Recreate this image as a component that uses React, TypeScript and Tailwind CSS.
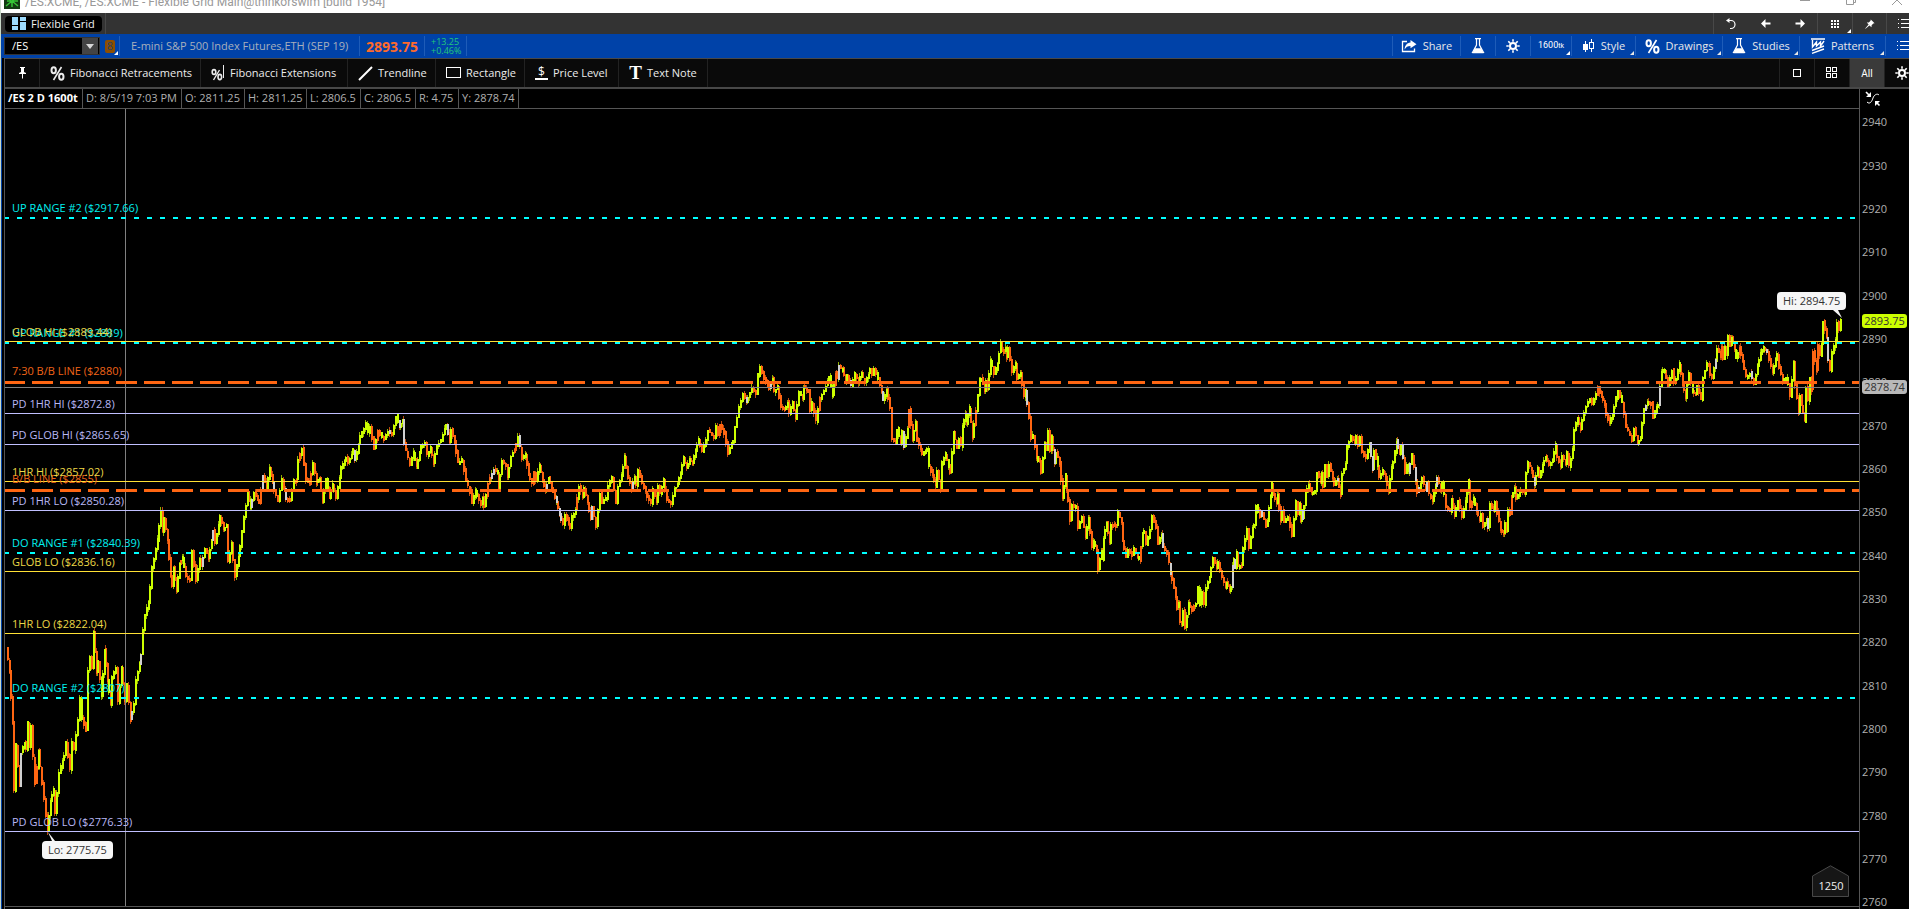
import React from "react";

/* ---------- price scale ---------- */

const VIEW = { x: 5, y: 109, w: 1854, h: 797 };
const PX_PER_POINT = 4.332;
const yOf = (price: number) => 341.5 + (2889.44 - price) * PX_PER_POINT;
const topPct = (y: number) => `${((y - VIEW.y) / VIEW.h) * 100}%`;
const leftPct = (x: number) => `${((x - VIEW.x) / VIEW.w) * 100}%`;

/* Swing points of the tick chart, x then y, in chart units. */
const SWINGS: number[] = [
  7, 648, 10, 672, 13, 723, 15, 790, 17, 745, 20, 787, 22, 753, 25, 742, 27, 750, 28, 722, 30, 748, 32, 727, 34, 757, 36, 783,
  39, 751, 43, 783, 45, 800, 48, 831, 51, 800, 54, 790, 56, 813, 60, 773, 65, 755, 67, 742, 71, 770, 73, 743, 75, 750, 79, 720,
  81, 698, 83, 718, 87, 730, 89, 670, 91, 657, 93, 668, 94, 632, 97, 672, 99, 661, 102, 696, 105, 650, 108, 680, 111, 704, 113, 678,
  117, 668, 119, 702, 122, 668, 126, 700, 128, 685, 131, 720, 135, 703, 137, 680, 142, 655, 144, 630, 146, 614, 149, 603, 151, 588,
  153, 567, 155, 558, 158, 540, 162, 512, 163, 531, 165, 519, 168, 540, 171, 577, 173, 586, 174, 567, 177, 591, 180, 564, 183, 557,
  187, 577, 191, 580, 193, 551, 197, 580, 200, 559, 202, 566, 206, 549, 209, 558, 214, 531, 216, 543, 221, 517, 224, 529, 227, 525,
  229, 561, 232, 544, 236, 576, 241, 547, 245, 517, 248, 493, 251, 508, 255, 492, 260, 503, 264, 476, 267, 488, 270, 468, 275, 490,
  279, 501, 283, 479, 287, 499, 291, 500, 294, 480, 297, 480, 299, 460, 303, 449, 307, 480, 310, 483, 314, 464, 317, 483, 320, 478,
  323, 502, 327, 479, 330, 498, 333, 484, 337, 498, 342, 468, 347, 458, 349, 463, 354, 450, 356, 460, 361, 437, 367, 424, 369, 432,
  371, 428, 375, 448, 379, 431, 385, 440, 389, 431, 393, 435, 397, 416, 400, 427, 403, 420, 405, 444, 411, 465, 414, 452, 417, 467,
  422, 446, 426, 443, 428, 455, 431, 448, 434, 463, 438, 446, 442, 440, 447, 425, 450, 442, 452, 430, 455, 442, 459, 462, 463, 460,
  467, 480, 471, 492, 473, 502, 476, 491, 482, 505, 483, 497, 485, 507, 489, 483, 495, 469, 498, 472,
  499, 488, 503, 461, 507, 466, 508, 477, 512, 457, 517, 445, 519, 436, 523, 458, 526, 454, 529, 475, 533, 483, 535, 473, 537, 480,
  540, 465, 543, 480, 546, 491, 549, 477, 554, 493, 557, 502, 560, 515, 564, 524, 566, 515, 571, 528, 573, 517, 576, 510, 580, 487,
  583, 497, 585, 489, 588, 502, 591, 520, 593, 507, 597, 527, 601, 493, 603, 503, 607, 498, 609, 485, 613, 478, 617, 503, 619, 486,
  622, 475, 625, 457, 629, 478, 632, 488, 635, 477, 637, 486, 639, 470, 643, 483, 648, 497, 652, 503, 654, 490, 657, 502, 659, 487,
  661, 493, 664, 480, 668, 500, 672, 503, 675, 490, 678, 484, 681, 473, 684, 458, 687, 468, 690, 459, 693, 463, 696, 450, 699, 440,
  703, 452, 707, 440, 709, 430, 715, 438, 717, 426, 719, 436, 721, 425, 725, 433, 729, 453, 732, 443, 734, 441, 736, 427, 740, 407,
  744, 394, 747, 402, 753, 388, 757, 394, 759, 375, 761, 367, 765, 378, 770, 389, 773, 378, 775, 391, 778, 387, 782, 407, 785, 410,
  788, 402, 790, 414, 793, 402, 796, 419, 800, 392, 803, 398, 804, 387, 809, 391, 811, 410, 813, 403, 817, 421, 821, 399, 825, 391,
  830, 376, 833, 396, 836, 373, 838, 379, 840, 367, 843, 369, 846, 382, 848, 376, 852, 386, 856, 374, 859, 382, 862, 373, 866, 383,
  871, 369, 873, 375, 875, 369, 879, 378, 882, 393, 884, 401, 887, 389, 891, 408, 893, 438, 896, 444, 898, 429, 901, 444, 903, 432,
  905, 447, 908, 428, 910, 410, 913, 440, 916, 422, 918, 440, 923, 455, 928, 449, 930, 467, 933, 475, 936, 486, 938, 470, 941, 490,
  943, 463, 946, 454, 951, 472, 954, 432, 958, 448, 960, 438, 962, 446, 963, 427, 966, 414, 967, 423, 970, 408, 973, 438, 977, 410,
  980, 380, 982, 378, 985, 391, 987, 381, 988, 389, 991, 360, 993, 366, 995, 375, 998, 363, 1001, 343, 1003, 352, 1006, 349, 1007, 358,
  1009, 348, 1013, 372, 1016, 363, 1018, 378, 1021, 373, 1025, 397, 1026, 390, 1030, 417, 1032, 438, 1034, 435, 1037, 458, 1040, 462,
  1042, 472, 1045, 443, 1047, 450, 1049, 431, 1051, 450, 1052, 437, 1055, 463, 1057, 452, 1060, 463, 1063, 497, 1066, 475, 1067, 490,
  1069, 500, 1071, 521, 1073, 504, 1077, 508, 1079, 528, 1083, 517, 1086, 538, 1089, 518, 1093, 547, 1094, 542, 1097, 550, 1099, 570,
  1102, 550, 1103, 560, 1104, 538, 1107, 523, 1110, 543, 1112, 525, 1117, 525, 1119, 512, 1122, 523, 1123, 541, 1127, 557, 1129, 549,
  1133, 556, 1135, 549, 1140, 560, 1143, 534, 1145, 531, 1147, 545, 1151, 530, 1153, 516, 1157, 527, 1159, 543, 1162, 535, 1164, 548,
  1168, 553, 1171, 573, 1173, 579, 1176, 597, 1178, 608, 1179, 603, 1181, 622, 1182, 624, 1184, 610, 1186, 627, 1189, 603, 1193, 611,
  1197, 603, 1199, 587, 1201, 605, 1203, 593, 1205, 604, 1207, 588, 1210, 577, 1214, 558, 1217, 568, 1219, 563, 1223, 578, 1226, 587,
  1227, 582, 1230, 590, 1232, 587, 1233, 565, 1234, 560, 1236, 569, 1237, 553, 1239, 565, 1242, 566, 1244, 548, 1248, 530, 1250, 548,
  1253, 528, 1255, 525, 1257, 505, 1261, 517, 1263, 512, 1267, 527, 1268, 520, 1271, 497, 1272, 483, 1274, 495, 1277, 503, 1278, 495,
  1281, 521, 1283, 510, 1285, 522, 1289, 517, 1293, 535, 1297, 502, 1299, 513, 1300, 503, 1301, 521, 1302, 510, 1303, 518, 1306, 493,
  1309, 484, 1312, 492, 1316, 491, 1318, 472, 1321, 482, 1322, 473, 1324, 486, 1326, 464, 1328, 477, 1330, 465, 1335, 485, 1338, 479,
  1341, 495, 1343, 474, 1346, 463, 1348, 446, 1352, 437, 1355, 443, 1357, 437, 1359, 445, 1361, 437, 1363, 452, 1367, 459, 1370, 443,
  1373, 470, 1375, 450, 1378, 466, 1380, 478, 1383, 470, 1386, 478, 1389, 492, 1392, 467, 1394, 463, 1397, 441, 1400, 454, 1402, 444,
  1406, 472, 1408, 464, 1409, 472, 1413, 455, 1416, 480, 1418, 493, 1423, 478, 1426, 491, 1428, 482, 1430, 494, 1433, 501, 1438, 478,
  1441, 490, 1443, 482, 1447, 507, 1451, 511, 1452, 498, 1455, 517, 1459, 500, 1463, 517, 1466, 501, 1469, 481, 1471, 507, 1474, 498,
  1477, 511, 1480, 521, 1482, 515, 1484, 527, 1487, 518, 1489, 528, 1491, 504, 1494, 511, 1496, 503, 1498, 513, 1501, 530, 1504, 533,
  1505, 523, 1507, 531, 1509, 510, 1511, 514, 1512, 497, 1515, 488, 1517, 498, 1522, 490, 1525, 493, 1527, 473, 1529, 463, 1532, 471,
  1535, 484, 1538, 468, 1540, 477, 1543, 465, 1546, 457, 1550, 465, 1553, 460, 1556, 445, 1558, 457, 1561, 466, 1563, 455, 1566, 464,
  1568, 453, 1570, 466, 1573, 450, 1575, 430, 1578, 418, 1581, 430, 1583, 420, 1587, 407, 1591, 398, 1593, 403, 1597, 395, 1599, 388,
  1602, 397, 1605, 404, 1607, 415, 1610, 423, 1613, 415, 1617, 398, 1619, 391, 1623, 402, 1627, 427, 1631, 435, 1633, 441, 1635, 429,
  1638, 442, 1641, 438, 1643, 423, 1645, 410, 1648, 402, 1652, 403, 1654, 417, 1657, 407, 1659, 405, 1661, 387, 1662, 372, 1665, 370,
  1669, 386, 1673, 370, 1675, 383, 1677, 378, 1680, 364, 1683, 384, 1686, 397, 1688, 385, 1690, 374, 1693, 391, 1696, 395, 1698, 387,
  1702, 399, 1704, 377, 1707, 364, 1709, 364, 1711, 374, 1713, 378, 1716, 360, 1718, 348, 1721, 356, 1722, 347, 1724, 359, 1725, 347,
  1727, 355, 1729, 336, 1731, 345, 1732, 337, 1735, 350, 1737, 358, 1740, 348, 1743, 362, 1747, 377, 1751, 373, 1755, 384, 1758, 365,
  1761, 354, 1764, 347, 1768, 352, 1772, 367, 1773, 372, 1778, 354, 1780, 367, 1783, 382, 1787, 377, 1789, 385, 1791, 397, 1794, 362,
  1796, 384, 1799, 412, 1801, 395, 1802, 405, 1805, 421, 1807, 387, 1809, 400, 1811, 377, 1812, 390, 1814, 352, 1817, 370, 1819, 345,
  1821, 355, 1822, 343, 1824, 322, 1827, 337, 1829, 360, 1831, 371, 1833, 353, 1836, 340, 1838, 322, 1840, 330, 1841, 320,
];

function noise(seed: number) {
  const v = Math.sin(seed * 12.9898) * 43758.5453;
  return v - Math.floor(v);
}

/* Turns the swing points into two-unit-wide bars with one-unit wicks. */
function buildBars() {
  const out = { up: "", down: "", flat: "", upWick: "", downWick: "" };
  for (let i = 2; i < SWINGS.length; i += 2) {
    const x0 = SWINGS[i - 2];
    const y0 = SWINGS[i - 1];
    const x1 = SWINGS[i];
    const y1 = SWINGS[i + 1];
    const steps = Math.max(1, Math.round((x1 - x0) / 2));
    for (let s = 0; s < steps; s++) {
      const xa = Math.round(x0 + ((x1 - x0) * s) / steps);
      const ya = y0 + ((y1 - y0) * s) / steps;
      const yb = y0 + ((y1 - y0) * (s + 1)) / steps;
      const k = xa * 3 + s;
      const top = Math.round(Math.min(ya, yb) - noise(k) * 2);
      const bottom = Math.round(Math.max(ya, yb) + noise(k + 7) * 2);
      const h = Math.max(4, bottom - top);
      const wickTop = top - Math.round(noise(k + 3) * 3);
      const wickH = h + (top - wickTop) + Math.round(noise(k + 5) * 3);
      const body = `M${xa} ${top}h2v${h}h-2z`;
      const wick = `M${xa} ${wickTop}h1v${wickH}h-1z`;
      const rising = noise(k + 11) > 0.94 ? yb > ya : yb < ya;
      if (noise(k + 13) < 0.04) out.flat += body;
      else if (rising) out.up += body;
      else out.down += body;
      if (rising) out.upWick += wick;
      else out.downWick += wick;
    }
  }
  return out;
}

const BARS = buildBars();

/* ---------- chart levels ---------- */

type Kind = "solid" | "dots" | "dashes";
type Level = { text: string; y: number; kind: Kind; line: string; label: string };

const CYAN = { line: "#00ffff", label: "text-[#00f0f0]" };
const YELLOW = { line: "#ffe135", label: "text-[#ecd846]" };
const LAVENDER = { line: "#c0bfff", label: "text-[#b8b7f4]" };
const ORANGE = { line: "#ff6612", label: "text-[#f06418]" };

const LEVELS: Level[] = [
  { text: "UP RANGE #2 ($2917.66)", y: 218, kind: "dots", ...CYAN },
  { text: "UP RANGE #1 ($2889)", y: 343, kind: "dots", ...CYAN },
  { text: "GLOB HI ($2889.44)", y: 341, kind: "solid", ...YELLOW },
  { text: "7:30 B/B LINE ($2880)", y: 382, kind: "dashes", ...ORANGE },
  { text: "PD 1HR HI ($2872.8)", y: 413, kind: "solid", ...LAVENDER },
  { text: "PD GLOB HI ($2865.65)", y: 444, kind: "solid", ...LAVENDER },
  { text: "B/B LINE ($2855)", y: 490, kind: "dashes", ...ORANGE },
  { text: "1HR HI ($2857.02)", y: 481, kind: "solid", ...YELLOW },
  { text: "PD 1HR LO ($2850.28)", y: 510, kind: "solid", ...LAVENDER },
  { text: "DO RANGE #1 ($2840.39)", y: 553, kind: "dots", ...CYAN },
  { text: "GLOB LO ($2836.16)", y: 571, kind: "solid", ...YELLOW },
  { text: "1HR LO ($2822.04)", y: 633, kind: "solid", ...YELLOW },
  { text: "DO RANGE #2 ($2807)", y: 698, kind: "dots", ...CYAN },
  { text: "PD GLOB LO ($2776.33)", y: 831, kind: "solid", ...LAVENDER },
];

/* Rectangles of one level line: dash length, period and thickness by kind. */
const PATTERN: Record<Kind, { dash: number; period: number; up: number; thick: number }> = {
  solid: { dash: VIEW.w + 1, period: VIEW.w + 1, up: 0, thick: 1 },
  dots: { dash: 5, period: 13, up: 1, thick: 2 },
  dashes: { dash: 21, period: 28, up: 1, thick: 3 },
};

function linePath({ y, kind }: Level) {
  const p = PATTERN[kind];
  let d = "";
  for (let x = VIEW.x - 1; x < VIEW.x + VIEW.w; x += p.period) {
    d += `M${x} ${y - p.up}h${p.dash}v${p.thick}h-${p.dash}z`;
  }
  return d;
}

const LABEL_GAP: Record<Kind, string> = { solid: "pb-px", dots: "pb-0.5", dashes: "pb-[3px]" };

const TICKS = Array.from({ length: 19 }, (_, i) => 2940 - i * 10);

/* ---------- icons ---------- */

const Percent = () => (
  <svg width="15" height="15" viewBox="0 0 15 15" fill="none" stroke="currentColor">
    <ellipse cx="3.7" cy="4.3" rx="2.2" ry="3" strokeWidth="2" />
    <ellipse cx="11.3" cy="10.7" rx="2.2" ry="3" strokeWidth="2" />
    <path d="M11.5 1 3.5 14" strokeWidth="1.6" />
  </svg>
);

const PercentBar = () => (
  <svg width="14" height="16" viewBox="0 0 14 16" fill="none" stroke="currentColor">
    <ellipse cx="3" cy="7" rx="1.8" ry="2.4" strokeWidth="1.6" />
    <ellipse cx="8.8" cy="12" rx="1.8" ry="2.6" strokeWidth="1.6" />
    <path d="M8.5 5 2.5 15" strokeWidth="1.4" />
    <path d="M12.5 0v13" />
  </svg>
);

const Flask = () => (
  <svg width="14" height="16" viewBox="0 0 14 16" fill="none" stroke="currentColor">
    <path d="M4 .7h6M5.5 1v6L1.5 14.5h11L8.5 7V1" strokeWidth="1.2" />
    <path d="M3.8 10.3h6.4l2.5 5H1.3z" fill="currentColor" stroke="none" />
  </svg>
);

const Gear = () => (
  <svg width="14" height="14" viewBox="0 0 14 14" fill="none" stroke="currentColor">
    <circle cx="7" cy="7" r="3" strokeWidth="2" />
    <path d="M7 .3v2.5M7 11.2v2.5M.3 7h2.5M11.2 7h2.5M2.3 2.3l1.8 1.8M9.9 9.9l1.8 1.8M11.7 2.3 9.9 4.1M4.1 9.9l-1.8 1.8" strokeWidth="1.6" />
  </svg>
);

const ShareIcon = () => (
  <svg width="16" height="14" viewBox="0 0 16 14" fill="none" stroke="currentColor">
    <path d="M6 2.500H1.500v10h12V9.500" strokeWidth="1.3" />
    <path d="M9.5 1 15.5 5.2 9.5 9.2V7C6.5 7 5 8 3.6 10.5 3.8 6.5 5.8 3.6 9.5 3.4z" fill="currentColor" stroke="none" />
  </svg>
);

const Candles = () => (
  <svg width="13" height="14" viewBox="0 0 13 14" fill="none" stroke="currentColor" shapeRendering="crispEdges">
    <path d="M3.5 2v11M9.5 0v3M9.5 10v3" />
    <path d="M1 5h5v6H1z" fill="currentColor" stroke="none" />
    <path d="M7.5 3.5h4v6h-4z" />
  </svg>
);

const PatternIcon = () => (
  <svg width="14" height="16" viewBox="0 0 14 16" fill="none" stroke="currentColor">
    <path d="M0 1h14M1.500 2v7l4-5v4l4-4v4l3.500-5" strokeWidth="1.4" />
    <path d="M1 12.500 13 8M1 15.300 13 11" strokeWidth="1.4" />
  </svg>
);

const Pushpin = () => (
  <svg width="7" height="12" viewBox="0 0 7 12" fill="currentColor">
    <path d="M1 0h5v1H5v4l2 1v1H0V6l2-1V1H1zM3 7h1v4.500H3z" />
  </svg>
);

const TiltedPin = () => (
  <svg width="10" height="10" viewBox="0 0 10 10" fill="currentColor">
    <path d="M5.800.4 9.600 4.200 8.300 4.500 6.600 6.300 6.500 8.200 4.400 6.400.6 9.800.2 9.400 3.600 5.600 1.800 3.500 3.800 3.400 5.500 1.700z" />
  </svg>
);

const ListIcon = () => (
  <svg width="13" height="10" viewBox="0 0 13 10" fill="currentColor" shapeRendering="crispEdges" className="shrink-0">
    <path d="M0 0h1v1H0zM3 0h10v1H3zM0 4h1v1H0zM3 4h10v1H3zM0 8h1v1H0zM3 8h10v1H3z" />
  </svg>
);

const Dots = () => (
  <svg width="8" height="8" viewBox="0 0 8 8" fill="currentColor" shapeRendering="crispEdges">
    <path d="M0 0h2v2H0zM3 0h2v2H3zM6 0h2v2H6zM0 3h2v2H0zM3 3h2v2H3zM6 3h2v2H6zM0 6h2v2H0zM3 6h2v2H3zM6 6h2v2H6z" />
  </svg>
);

const Arrow = ({ flip = false }: { flip?: boolean }) => (
  <svg width="10" height="9" viewBox="0 0 10 9" fill="currentColor" className={flip ? "rotate-180" : ""}>
    <path d="M0 4.500 4.500 0v3.500H9.500v2H4.500V9z" />
  </svg>
);

const Undo = () => (
  <svg width="10" height="12" viewBox="0 0 10 12" fill="none" stroke="currentColor">
    <path d="M1.500 2.500H5a4 4 0 0 1 0 8H4" strokeWidth="1.2" />
    <path d="M0 2.500 3.500 0v5z" fill="currentColor" stroke="none" />
  </svg>
);

const FourSquares = () => (
  <svg width="12" height="12" viewBox="0 0 12 12" fill="none" stroke="currentColor" shapeRendering="crispEdges">
    <path d="M.5.5h4v4h-4zM6.500.5h4v4h-4zM.5 6.500h4v4h-4zM6.500 6.500h4v4h-4z" />
  </svg>
);

const FitIcon = () => (
  <svg width="16" height="16" viewBox="0 0 16 16" fill="none" stroke="currentColor">
    <path d="M2 11c3 3 5-1 6-4s4-5 6-3" />
    <path d="M1 1l3 3M14.500 14.500l-3-3" strokeWidth="1.6" />
    <path d="M6 1v5H1zM10 15v-5h5z" fill="currentColor" stroke="none" />
  </svg>
);

const Corner = () => (
  <svg width="4" height="4" viewBox="0 0 4 4" fill="currentColor" className="absolute right-px bottom-px">
    <path d="M4 0v4H0z" />
  </svg>
);

/* ---------- bars above the chart ---------- */

function TitleBar() {
  return (
    <header className="flex h-[13px] shrink-0 items-end justify-between overflow-hidden bg-white pl-[3px] text-[#999]">
      <div className="flex items-end gap-[5px]">
        <svg width="16" height="17" viewBox="0 0 16 17" className="mb-1 shrink-0">
          <path d="M0 0h16v17H0z" fill="#123c12" />
          <path d="M2 3l5 6M14 4l-6 5M8 9v6M2 14l6-5M14 14 8 9M3 9h11" stroke="#35c435" strokeWidth="1.5" />
        </svg>
        <h1 className="mb-[3px] font-['Roboto','Open_Sans',sans-serif] text-[12px] leading-4 whitespace-nowrap">
          /ES:XCME, /ES:XCME - Flexible Grid Main@thinkorswim [build 1954]
        </h1>
      </div>
      <div className="flex h-full gap-9 pr-[7px]">
        <button aria-label="Minimize">
          <svg width="10" height="13" viewBox="0 0 10 13" className="block"><path d="M0 0h10v1H0z" fill="currentColor" /></svg>
        </button>
        <button aria-label="Restore">
          <svg width="10" height="13" viewBox="0 0 10 13" fill="none" stroke="currentColor" className="block">
            <path d="M.5-3v7.500h7V-3M7.500 2.500h2V-3" />
          </svg>
        </button>
        <button aria-label="Close">
          <svg width="10" height="13" viewBox="0 0 10 13" fill="none" stroke="currentColor" className="block">
            <path d="M0 5l5-5 5 5" />
          </svg>
        </button>
      </div>
    </header>
  );
}

const slot = "relative flex h-full shrink-0 items-center justify-center";

function TabBar() {
  return (
    <nav className="flex h-[21px] shrink-0 items-center justify-between bg-[#333] pl-1">
      <div className="flex h-full items-center border-r border-[#484848] pr-[3px]">
        <button className="flex h-4 items-center gap-[5px] rounded-[4px] bg-black px-[7px] text-[11px] leading-4 text-[#f0f0f0]">
          <svg width="14" height="13" viewBox="0 0 14 13" fill="#9ddcff" shapeRendering="crispEdges">
            <path d="M0 0h6v8H0zM0 9h6v4H0zM8 0h6v4H8zM8 5h6v8H8z" />
          </svg>
          Flexible Grid
        </button>
      </div>
      <div className="flex h-full text-white">
        <div className="flex h-full w-[104px] items-center border-l border-[#484848]">
          <button aria-label="Undo" className={`${slot} w-[34px]`}><Undo /></button>
          <button aria-label="Back" className={`${slot} w-[36px]`}><Arrow /></button>
          <button aria-label="Forward" className={`${slot} w-[32px]`}><Arrow flip /></button>
        </div>
        <button aria-label="Layouts" className={`${slot} w-[35px] border-l border-[#484848]`}><Dots /><Corner /></button>
        <button aria-label="Pin window" className={`${slot} w-[34px] border-l border-[#484848]`}><TiltedPin /></button>
        <button aria-label="Window menu" className="flex h-full w-[23px] shrink-0 items-center overflow-hidden border-l border-[#484848] pl-[11px]"><ListIcon /></button>
      </div>
    </nav>
  );
}

const blueSlot = "relative flex h-5 shrink-0 items-center justify-center gap-1.5 border-l border-[#1e5cb8]";

function SymbolBar() {
  return (
    <div className="flex h-[24px] shrink-0 items-center justify-between bg-[#0042a8] pl-[3px] text-[11px] text-[#e8e8e8]">
      <div className="flex items-center">
        <div className="flex h-[18px] w-[96px] items-center border border-[#333] bg-black pr-px">
          <input aria-label="Symbol" defaultValue="/ES" className="w-full min-w-0 bg-transparent pl-[7px] text-[11px] leading-4 text-white outline-none" />
          <button aria-label="Choose symbol" className="flex h-4 w-4 shrink-0 items-center justify-center bg-[#444]">
            <svg width="8" height="5" viewBox="0 0 8 5" fill="#d8d8d8"><path d="M0 0h8L4 5z" /></svg>
          </button>
        </div>
        <button aria-label="Link group 8" className="relative ml-[5px] flex h-5 w-[14px] items-center text-white">
          <span className="flex h-[13px] w-[10px] items-center justify-center rounded-[2px] bg-[#8f4f00] text-[11px] leading-3 text-[#2a3f66]">8</span>
          <Corner />
        </button>
        <span className="flex h-5 w-[240px] items-center border-l border-[#1e5cb8] pl-[11px] whitespace-nowrap text-[#a8b0bc]">
          E-mini S&amp;P 500 Index Futures,ETH (SEP 19)
        </span>
        <span className="flex h-5 w-[65px] items-center justify-center border-l border-[#1e5cb8] text-[14px] font-bold text-[#ff6a2a]">2893.75</span>
        <span className="flex h-5 w-[43px] flex-col justify-center border-x border-[#1e5cb8] pl-1.5 text-[9px] leading-[9px] text-[#22c87a]">
          <span>+13.25</span>
          <span>+0.46%</span>
        </span>
      </div>
      <div className="flex items-center">
        <button className={`${blueSlot} w-[68px]`}><span className="text-white"><ShareIcon /></span>Share</button>
        <button aria-label="Studies library" className={`${blueSlot} w-[35px] text-white`}><Flask /></button>
        <button aria-label="Chart settings" className={`${blueSlot} w-[35px] text-white`}><Gear /></button>
        <button className={`${blueSlot} w-[41px] font-['Liberation_Sans_Narrow','Roboto',sans-serif] text-[9px] text-white`}><span>1600<span className="text-[7px]">tk</span></span><Corner /></button>
        <button className={`${blueSlot} w-[64px]`}><span className="text-white"><Candles /></span>Style<Corner /></button>
        <button className={`${blueSlot} w-[87px]`}><span className="text-white"><Percent /></span>Drawings<Corner /></button>
        <button className={`${blueSlot} w-[77px]`}><span className="text-white"><Flask /></span>Studies<Corner /></button>
        <button className={`${blueSlot} w-[86px]`}><span className="text-white"><PatternIcon /></span>Patterns<Corner /></button>
        <button aria-label="More" className="flex h-5 w-[24px] shrink-0 items-center overflow-hidden border-l border-[#1e5cb8] pl-[11px] text-white"><ListIcon /></button>
      </div>
    </div>
  );
}

const tool = "flex h-full shrink-0 items-center gap-[5px] border-r border-[#222] pl-2.5 whitespace-nowrap [&>svg]:shrink-0";

function DrawingBar() {
  return (
    <div className="flex h-[31px] shrink-0 justify-between border-t border-b-2 border-[#484848] bg-[#0a0a0a] text-[11px] text-[#ececec]">
      <div className="flex">
        <button aria-label="Pin toolbar" className="flex h-full w-[35px] items-center justify-center border-r border-[#222] text-white"><Pushpin /></button>
        <button className={`${tool} w-[161px]`}><Percent />Fibonacci Retracements</button>
        <button className={`${tool} w-[147px]`}><PercentBar />Fibonacci Extensions</button>
        <button className={`${tool} w-[88px]`}>
          <svg width="15" height="15" viewBox="0 0 15 15" stroke="white" strokeWidth="2"><path d="M1 14 14 1" /></svg>
          Trendline
        </button>
        <button className={`${tool} w-[89px]`}>
          <svg width="15" height="12" viewBox="0 0 15 12" fill="none" stroke="white" shapeRendering="crispEdges"><path d="M.5.5h14v10H.5z" /></svg>
          Rectangle
        </button>
        <button className={`${tool} w-[94px]`}>
          <span aria-hidden="true" className="flex h-[14px] w-[13px] items-center justify-center border-b-2 border-white text-[12px] leading-3 text-white">$</span>
          Price Level
        </button>
        <button className={`${tool} w-[89px]`}>
          <span aria-hidden="true" className="w-[13px] font-['Liberation_Serif',serif] text-[19px] leading-4 font-bold text-white">T</span>
          Text Note
        </button>
      </div>
      <div className="flex text-white">
        <button aria-label="Single chart" className={`${slot} w-[35px] border-l border-[#222]`}>
          <svg width="8" height="8" viewBox="0 0 8 8" fill="none" stroke="currentColor" shapeRendering="crispEdges"><path d="M.5.5h7v7h-7z" /></svg>
        </button>
        <button aria-label="Chart grid" className={`${slot} w-[35px] border-l border-[#222]`}><FourSquares /></button>
        <button className={`${slot} w-[35px] border-l border-[#222] bg-[#3a3a3a] font-['Liberation_Sans_Narrow','Roboto',sans-serif] text-[10px]`}>All</button>
        <button aria-label="Toolbar settings" className="flex h-full w-[25px] shrink-0 items-center overflow-hidden border-l border-[#222] pl-2.5"><span className="shrink-0"><Gear /></span></button>
      </div>
    </div>
  );
}

const INFO = [
  { text: "D: 8/5/19 7:03 PM", width: "w-[99px]" },
  { text: "O: 2811.25", width: "w-[63px]" },
  { text: "H: 2811.25", width: "w-[62px]" },
  { text: "L: 2806.5", width: "w-[54px]" },
  { text: "C: 2806.5", width: "w-[55px]" },
  { text: "R: 4.75", width: "w-[43px]" },
  { text: "Y: 2878.74", width: "w-[60px]" },
];

function InfoRow() {
  return (
    <div className="flex h-5 shrink-0 border-b border-[#555] text-[11px] leading-[18px] whitespace-nowrap text-[#b0b0b0]">
      <span className="w-[78px] border-r border-[#555] pl-[3px] font-bold text-white">/ES 2 D 1600t</span>
      {INFO.map((f) => (
        <span key={f.text} className={`${f.width} border-r border-[#555] pl-[3px]`}>{f.text}</span>
      ))}
    </div>
  );
}

/* ---------- chart ---------- */

function Plot() {
  return (
    <div className="relative min-h-0 flex-1 overflow-hidden">
      <svg
        role="img"
        aria-label="/ES tick chart"
        viewBox={`${VIEW.x} ${VIEW.y} ${VIEW.w} ${VIEW.h}`}
        preserveAspectRatio="none"
        className="absolute inset-0 h-full w-full"
        shapeRendering="crispEdges"
      >
        <path d={BARS.upWick} fill="#8fb000" />
        <path d={BARS.downWick} fill="#b84a10" />
        <path d={BARS.down} fill="#ff6612" />
        <path d={BARS.up} fill="#ccff00" />
        <path d={BARS.flat} fill="#d0d0d0" />
        <path d="M125 109h1v797h-1zM5 387h1854v1H5z" fill="#808080" />
        {LEVELS.map((l) => (
          <path key={l.text} d={linePath(l)} fill={l.line} />
        ))}
      </svg>

      {LEVELS.map((l) => (
        <div
          key={l.text}
          className={`absolute left-[7px] -translate-y-full text-[11px] leading-4 whitespace-nowrap ${LABEL_GAP[l.kind]} ${l.label}`}
          style={{ top: topPct(l.y) }}
        >
          {l.text}
        </div>
      ))}

      <div className="absolute flex h-[18px] items-center rounded-[4px] bg-[#f6f6f6] px-1.5 text-[11px] whitespace-nowrap text-[#333]" style={{ left: leftPct(1777), top: topPct(292) }}>
        Hi: 2894.75
        <svg width="9" height="9" viewBox="0 0 9 9" className="absolute top-full right-1" fill="#f6f6f6"><path d="M0 0h5l4 8z" /></svg>
      </div>
      <div className="absolute flex h-[18px] items-center rounded-[4px] bg-[#f6f6f6] px-1.5 text-[11px] whitespace-nowrap text-[#333]" style={{ left: leftPct(42), top: topPct(841) }}>
        Lo: 2775.75
        <svg width="9" height="9" viewBox="0 0 9 9" className="absolute bottom-full left-1.5" fill="#f6f6f6"><path d="M0 0 7 9H4z" /></svg>
      </div>

      <div className="absolute right-[9px] bottom-[9px] flex h-8 w-[38px] items-end justify-center pb-[3px] text-[11px] leading-4 text-[#f0f0f0]">
        <svg width="38" height="32" viewBox="0 0 38 32" className="absolute inset-0" fill="#161616" stroke="#484848">
          <path d="M.5 31.500V11L18.500.800 36.500 11v20.500z" />
        </svg>
        <span className="relative">1250</span>
      </div>
    </div>
  );
}

function PriceAxis() {
  return (
    <aside className="flex w-[50px] shrink-0 flex-col border-l border-[#555] pb-[3px] text-[11px] text-[#b0b0b0]">
      <button aria-label="Fit chart" className="flex h-5 shrink-0 items-center pl-[5px] text-white"><FitIcon /></button>
      <div className="relative min-h-0 flex-1">
        {TICKS.map((p) => (
          <span key={p} className="absolute left-[2px] -translate-y-1/2 leading-4" style={{ top: topPct(yOf(p)) }}>{p}</span>
        ))}
        <span className="absolute inset-x-[2px] flex h-[14px] -translate-y-1/2 items-center justify-center rounded-[3px] bg-[#ccff00] text-[#333]" style={{ top: topPct(321) }}>2893.75</span>
        <span className="absolute inset-x-[2px] flex h-[14px] -translate-y-1/2 items-center justify-center rounded-[3px] bg-[#b8b8b8] text-[#333]" style={{ top: topPct(387) }}>2878.74</span>
      </div>
    </aside>
  );
}

export default function App() {
  return (
    <div className="flex h-screen flex-col overflow-hidden border-l border-[#c8d8c8] bg-black font-['Open_Sans','Noto_Sans',sans-serif]">
      <TitleBar />
      <TabBar />
      <SymbolBar />
      <div className="flex min-h-0 flex-1 flex-col border-l border-[#0042a8] pl-0.5">
        <div className="flex min-h-0 flex-1 flex-col border-l border-[#555]">
          <DrawingBar />
          <div className="flex min-h-0 flex-1">
            <div className="flex min-w-0 flex-1 flex-col">
              <InfoRow />
              <Plot />
              <div className="h-[3px] shrink-0 border-t border-[#555]" />
            </div>
            <PriceAxis />
          </div>
        </div>
      </div>
    </div>
  );
}
